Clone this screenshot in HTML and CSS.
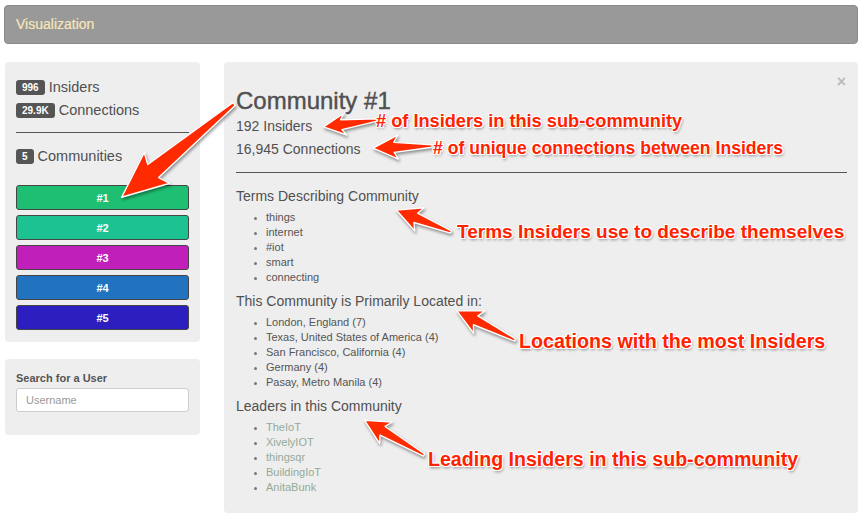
FILE: index.html
```html
<!DOCTYPE html>
<html>
<head>
<meta charset="utf-8">
<title>Visualization</title>
<link rel="stylesheet" href="styles.css">
</head>
<body>
<div class="topbar">Visualization</div>
<div class="layout">
  <aside class="sidebar">
    <section class="panel stats">
      <div class="stat"><span class="badge">996</span>Insiders</div>
      <div class="stat"><span class="badge">29.9K</span>Connections</div>
      <hr class="rule">
      <div class="stat"><span class="badge">5</span>Communities</div>
      <div class="communities">
        <button class="comm c1">#1</button>
        <button class="comm c2">#2</button>
        <button class="comm c3">#3</button>
        <button class="comm c4">#4</button>
        <button class="comm c5">#5</button>
      </div>
    </section>
    <section class="panel search">
      <label class="search-label" for="user">Search for a User</label>
      <input id="user" class="search-input" type="text" placeholder="Username">
    </section>
  </aside>
  <main class="panel detail">
    <span class="close">&times;</span>
    <h1 class="title">Community #1</h1>
    <p class="metric">192 Insiders</p>
    <p class="metric">16,945 Connections</p>
    <hr class="rule main-rule">
    <h3 class="sub">Terms Describing Community</h3>
    <ul class="items">
      <li>things</li>
      <li>internet</li>
      <li>#iot</li>
      <li>smart</li>
      <li>connecting</li>
    </ul>
    <h3 class="sub">This Community is Primarily Located in:</h3>
    <ul class="items">
      <li>London, England (7)</li>
      <li>Texas, United States of America (4)</li>
      <li>San Francisco, California (4)</li>
      <li>Germany (4)</li>
      <li>Pasay, Metro Manila (4)</li>
    </ul>
    <h3 class="sub">Leaders in this Community</h3>
    <ul class="items leaders">
      <li><a href="#">TheIoT</a></li>
      <li><a href="#">XivelyIOT</a></li>
      <li><a href="#">thingsqr</a></li>
      <li><a href="#">BuildingIoT</a></li>
      <li><a href="#">AnitaBunk</a></li>
    </ul>
  </main>
</div>

<div class="annotations">
  <svg class="arrows" width="863" height="520" viewBox="0 0 863 520">
    <g fill="#ff2a00" stroke="#ffffff" stroke-width="1.4" stroke-linejoin="round">
      <polygon transform="translate(234 104) rotate(140.3)" points="0,-1.8 105,-8.5 100,-20 146,0 100,20 105,8.5 0,1.8"/>
      <polygon transform="translate(377 120) rotate(172.6)" points="0,-1.2 36,-5 32,-11 54,0 32,11 36,5 0,1.2"/>
      <polygon transform="translate(432 146) rotate(178)" points="0,-1.2 38,-5 34,-12 59,0 34,12 38,5 0,1.2"/>
      <polygon transform="translate(451 232) rotate(-158.2)" points="0,-1.2 38,-5 34,-12.5 59,0 34,12.5 38,5 0,1.2"/>
      <polygon transform="translate(515 340) rotate(-153.4)" points="0,-1.2 44,-5 40,-12.5 65,0 40,12.5 44,5 0,1.2"/>
      <polygon transform="translate(424 455) rotate(-149.7)" points="0,-1.2 48,-5 44,-12.5 69,0 44,12.5 48,5 0,1.2"/>
    </g>
  </svg>
  <span class="note n1"># of Insiders in this sub-community</span>
  <span class="note n2"># of unique connections between Insiders</span>
  <span class="note n3">Terms Insiders use to describe themselves</span>
  <span class="note n4">Locations with the most Insiders</span>
  <span class="note n5">Leading Insiders in this sub-community</span>
</div>
</body>
</html>
```
FILE: styles.css
```css
* { box-sizing: border-box; }

html, body {
  margin: 0;
  background: #ffffff;
}

body {
  position: relative;
  width: 863px;
  height: 520px;
  overflow: hidden;
  padding: 5px 5px 0 4px;
  font-family: "Liberation Sans", Arial, Helvetica, sans-serif;
  color: #555555;
}

.topbar {
  height: 39px;
  line-height: 37px;
  background: #999999;
  border: 1px solid #8a8a8a;
  border-radius: 4px;
  padding-left: 11px;
  font-size: 14px;
  color: #f6e7bb;
  -webkit-text-stroke: 0.2px #f6e7bb;
}

.layout {
  display: flex;
  gap: 24px;
  margin-top: 18px;
  padding-left: 1px;
  align-items: flex-start;
}

.sidebar {
  width: 195px;
  flex: none;
  display: flex;
  flex-direction: column;
  gap: 17px;
}

.panel {
  background: #eeeeee;
  border-radius: 4px;
}

.stats {
  padding: 14px 11px 12px 11px;
}

.stat {
  height: 23px;
  line-height: 23px;
  font-size: 14.5px;
  color: #505050;
  display: flex;
  align-items: center;
}

.badge {
  display: inline-block;
  height: 15px;
  line-height: 15px;
  padding: 0 6px;
  margin-right: 4px;
  background: #555555;
  color: #ffffff;
  font-size: 10px;
  font-weight: bold;
  border-radius: 3px;
}

.rule {
  border: 0;
  border-top: 1px solid #555555;
  margin: 10px 0 12px 0;
  height: 0;
}

.communities {
  margin-top: 17px;
  display: flex;
  flex-direction: column;
  gap: 5px;
}

.comm {
  display: block;
  width: 100%;
  height: 25px;
  border: 1px solid #454545;
  border-radius: 3px;
  color: #ffffff;
  font-family: "Liberation Sans", Arial, sans-serif;
  font-size: 11px;
  font-weight: bold;
  padding: 0;
}

.c1 { background: #1ebf72; }
.c2 { background: #1cc292; }
.c3 { background: #c01fba; }
.c4 { background: #2173c0; }
.c5 { background: #2d1fbf; }

.search {
  padding: 12px 11px 23px 11px;
}

.search-label {
  display: block;
  font-size: 11px;
  line-height: 14px;
  font-weight: bold;
  color: #555555;
  margin-bottom: 3px;
}

.search-input {
  display: block;
  width: 100%;
  height: 24px;
  border: 1px solid #cccccc;
  border-radius: 3px;
  background: #ffffff;
  padding: 0 9px;
  font-family: "Liberation Sans", Arial, sans-serif;
  font-size: 11px;
  color: #555555;
}

.search-input::placeholder { color: #9a9a9a; }

.detail {
  position: relative;
  width: 634px;
  flex: none;
  padding: 24px 11px 18px 12px;
}

.close {
  position: absolute;
  top: 12px;
  right: 12px;
  font-size: 16px;
  line-height: 16px;
  font-weight: bold;
  color: #bbbbbb;
}

.title {
  margin: 0;
  font-size: 24px;
  line-height: 29px;
  font-weight: normal;
  color: #505050;
  -webkit-text-stroke: 0.4px #505050;
}

.metric {
  margin: 0;
  font-size: 14px;
  line-height: 23px;
  color: #505050;
}

.main-rule {
  margin: 11px 0 13px 0;
}

.sub {
  margin: 0;
  font-size: 14px;
  line-height: 20px;
  font-weight: normal;
  color: #505050;
}

.items {
  margin: 4px 0 6px 0;
  padding-left: 30px;
  font-size: 11px;
  line-height: 15px;
  color: #555555;
  list-style: disc;
}

.items li::marker { color: #777777; font-size: 9px; }

.leaders { margin-bottom: 0; }

.leaders a {
  color: #95aa98;
  text-decoration: none;
}

/* annotation overlay */
.annotations {
  position: absolute;
  left: 0;
  top: 0;
  width: 863px;
  height: 520px;
  pointer-events: none;
}

.arrows {
  position: absolute;
  left: 0;
  top: 0;
  filter: drop-shadow(1px 2px 1.5px rgba(0, 0, 0, 0.4));
}

.note {
  position: absolute;
  white-space: nowrap;
  font-family: "Liberation Sans", Arial, sans-serif;
  font-size: 18px;
  line-height: 20px;
  font-weight: bold;
  color: #ff2200;
  text-shadow:
    1px 0 0 #fff, -1px 0 0 #fff, 0 1px 0 #fff, 0 -1px 0 #fff,
    1px 1px 0 #fff, -1px -1px 0 #fff, 1px -1px 0 #fff, -1px 1px 0 #fff,
    1px 2px 3px rgba(0, 0, 0, 0.45);
}

.n1 { left: 376px; top: 111px; font-size: 18.2px; }
.n2 { left: 433px; top: 138px; font-size: 17.6px; }
.n3 { left: 457px; top: 222px; font-size: 19px; }
.n4 { left: 519px; top: 331px; font-size: 19.7px; }
.n5 { left: 428px; top: 449px; font-size: 19.6px; }
```
